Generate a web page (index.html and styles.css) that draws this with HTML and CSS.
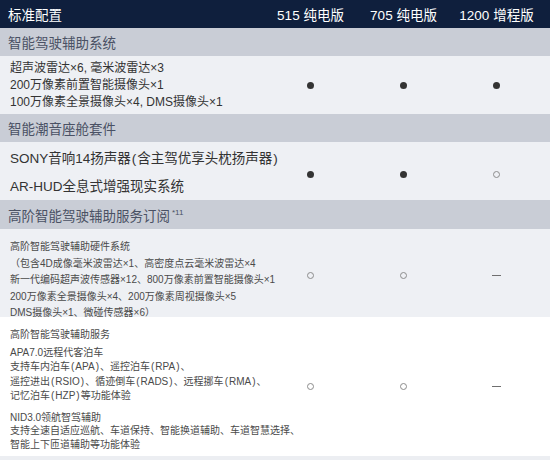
FILE: index.html
```html
<!DOCTYPE html>
<html lang="zh-CN">
<head>
<meta charset="utf-8">
<title>标准配置</title>
<link rel="stylesheet" href="styles.css">
</head>
<body>
<div class="table">
  <div class="row head">
    <div class="label">标准配置</div>
    <div class="cell">515 纯电版</div>
    <div class="cell">705 纯电版</div>
    <div class="cell">1200 增程版</div>
  </div>

  <div class="section">智能驾驶辅助系统</div>
  <div class="row r1">
    <div class="label">
      <p>超声波雷达×6, 毫米波雷达×3</p>
      <p>200万像素前置智能摄像头×1</p>
      <p>100万像素全景摄像头×4, DMS摄像头×1</p>
    </div>
    <div class="cell"><span class="dot"></span></div>
    <div class="cell"><span class="dot"></span></div>
    <div class="cell"><span class="dot"></span></div>
  </div>

  <div class="section">智能潮音座舱套件</div>
  <div class="row r2">
    <div class="label">
      <p>SONY音响14扬声器<span class="par">(</span>含主驾优享头枕扬声器<span class="par">)</span></p>
      <p>AR-HUD全息式增强现实系统</p>
    </div>
    <div class="cell"><span class="dot"></span></div>
    <div class="cell"><span class="dot"></span></div>
    <div class="cell"><span class="ring"></span></div>
  </div>

  <div class="section s3">高阶智能驾驶辅助服务订阅 <sup>*11</sup></div>
  <div class="row r3">
    <div class="label">
      <p>高阶智能驾驶辅助硬件系统</p>
      <p>（包含4D成像毫米波雷达×1、高密度点云毫米波雷达×4</p>
      <p>新一代编码超声波传感器×12、800万像素前置智能摄像头×1</p>
      <p>200万像素全景摄像头×4、200万像素周视摄像头×5</p>
      <p>DMS摄像头×1、微碰传感器×6）</p>
    </div>
    <div class="cell"><span class="ring"></span></div>
    <div class="cell"><span class="ring"></span></div>
    <div class="cell"><span class="dash"></span></div>
  </div>

  <div class="row r4">
    <div class="label">
      <p class="title">高阶智能驾驶辅助服务</p>
      <div class="group">
        <p>APA7.0远程代客泊车</p>
        <p>支持车内泊车<span class="par">(</span>APA<span class="par">)</span>、遥控泊车<span class="par">(</span>RPA<span class="par">)</span>、</p>
        <p>遥控进出<span class="par">(</span>RSIO<span class="par">)</span>、循迹倒车<span class="par">(</span>RADS<span class="par">)</span>、远程挪车<span class="par">(</span>RMA<span class="par">)</span>、</p>
        <p>记忆泊车<span class="par">(</span>HZP<span class="par">)</span>等功能体验</p>
      </div>
      <div class="group g2">
        <p>NID3.0领航智驾辅助</p>
        <p>支持全速自适应巡航、车道保持、智能换道辅助、车道智慧选择、</p>
        <p>智能上下匝道辅助等功能体验</p>
      </div>
    </div>
    <div class="cell"><span class="ring"></span></div>
    <div class="cell"><span class="ring"></span></div>
    <div class="cell"><span class="dash"></span></div>
  </div>
</div>
</body>
</html>
```

FILE: styles.css
```css
* { box-sizing: border-box; }

html, body {
  margin: 0;
  padding: 0;
  background: #eceef2;
}

body {
  width: 550px;
  height: 460px;
  overflow: hidden;
  font-family: "Liberation Sans", "Noto Sans CJK SC", sans-serif;
  color: #333;
}

p { margin: 0; }

.table {
  width: 550px;
}

.row {
  display: grid;
  grid-template-columns: 264px 93px 93px 93px;
  background: #eef0f4;
}

.cell {
  display: flex;
  align-items: center;
  justify-content: center;
}

.head {
  height: 28px;
  background: #0f1f3d;
  color: #fff;
  font-size: 13.5px;
  align-items: center;
}

.head .label {
  padding-left: 8px;
}

.head .cell {
  white-space: nowrap;
}

.section {
  height: 28px;
  display: flex;
  align-items: center;
  padding-left: 8px;
  background: #c9cdd6;
  color: #4a5164;
  font-size: 13.5px;
}

.section.s3 {
  height: 29px;
}

.section sup {
  font-size: 8px;
  margin-left: 2px;
  position: relative;
  top: -2px;
}

.par {
  padding: 0 1px;
}

.r1 {
  height: 58px;
  font-size: 12px;
  line-height: 17px;
}

.r1 .label {
  padding: 4px 0 0 10px;
  white-space: nowrap;
}

.r2 {
  height: 58px;
  font-size: 13.5px;
  line-height: 28px;
}

.r2 .label {
  padding: 3px 0 0 10px;
  white-space: nowrap;
}

.r3 {
  height: 88px;
  font-size: 10px;
  line-height: 16.6px;
  color: #4a4a4a;
}

.r3 .label {
  padding: 10px 0 0 10px;
  white-space: nowrap;
}

.r4 {
  height: 139px;
  background: #fff;
  font-size: 10px;
  line-height: 14px;
  color: #4a4a4a;
}

.r4 .label {
  padding: 11px 0 0 10px;
  white-space: nowrap;
}

.r4 .group {
  margin-top: 4px;
  line-height: 14.4px;
}

.r4 .group.g2 {
  margin-top: 7px;
  line-height: 13.5px;
}

.dot {
  width: 7px;
  height: 7px;
  border-radius: 50%;
  background: #333;
}

.r2 .cell {
  padding-top: 5px;
}

.ring {
  width: 7px;
  height: 7px;
  border-radius: 50%;
  border: 1px solid #8c8c8c;
}

.dash {
  width: 9px;
  height: 1.5px;
  background: #6f6f6f;
}
```
